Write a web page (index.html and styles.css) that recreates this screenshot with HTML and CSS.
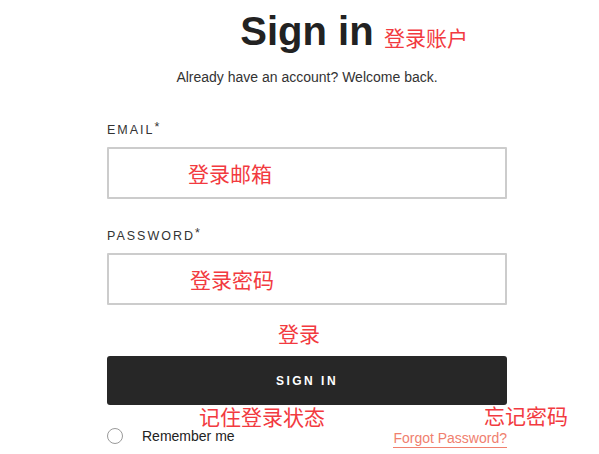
FILE: index.html
```html
<!DOCTYPE html>
<html lang="en">
<head>
<meta charset="utf-8">
<title>Sign in</title>
<link rel="stylesheet" href="styles.css">
</head>
<body>
<div class="page">
  <main class="form">
    <h1 class="title">Sign in</h1>
    <p class="subtitle">Already have an account? Welcome back.</p>
    <label class="label" for="email">EMAIL<span class="req">*</span></label>
    <input class="field" id="email" type="email">
    <label class="label label-pw" for="pw">PASSWORD<span class="req">*</span></label>
    <input class="field" id="pw" type="password">
    <button class="btn" type="button">SIGN IN</button>
    <div class="row">
      <label class="remember"><span class="radio"></span><span class="remember-text">Remember me</span></label>
      <a class="forgot" href="#">Forgot Password?</a>
    </div>
  </main>
  <span class="note note-title">登录账户</span>
  <span class="note note-email">登录邮箱</span>
  <span class="note note-pw">登录密码</span>
  <span class="note note-btn">登录</span>
  <span class="note note-remember">记住登录状态</span>
  <span class="note note-forgot">忘记密码</span>
</div>
</body>
</html>
```
FILE: styles.css
```css
* { box-sizing: border-box; }
html, body { margin: 0; padding: 0; background: #fff; }
body { font-family: "Liberation Sans", Arial, sans-serif; color: #333; }
.page { position: relative; width: 599px; height: 454px; overflow: hidden; }
.form {
  width: 400px;
  margin-left: 107px;
  display: flex;
  flex-direction: column;
}
.title {
  margin: 7px 0 0;
  font-size: 40px;
  line-height: 48px;
  font-weight: 700;
  color: #222;
  text-align: center;
}
.subtitle {
  margin: 12px 0 0;
  font-size: 14px;
  line-height: 20px;
  text-align: center;
  color: #333;
}
.label {
  display: block;
  height: 17px;
  margin-top: 35px;
  font-size: 12.5px;
  line-height: 17px;
  letter-spacing: 2px;
  color: #333;
}
.label-pw { margin-top: 29px; }
.req { position: relative; top: -3px; letter-spacing: 0; }
.field {
  display: block;
  margin: 8px 0 0;
  height: 52px;
  width: 100%;
  border: 2px solid #cccccc;
  border-radius: 1px;
  background: #fff;
  outline: none;
}
.btn {
  display: block;
  margin-top: 51px;
  height: 49px;
  width: 100%;
  border: 0;
  border-radius: 3px;
  background: #272727;
  color: #fff;
  font-family: "Liberation Sans", Arial, sans-serif;
  font-size: 12px;
  font-weight: 700;
  letter-spacing: 2.5px;
}
.row {
  margin-top: 21px;
  height: 20px;
  display: flex;
  align-items: center;
  justify-content: space-between;
}
.remember { display: flex; align-items: center; }
.radio {
  width: 16px;
  height: 16px;
  border: 1px solid #9a9a9a;
  border-radius: 50%;
  background: #fff;
}
.remember-text { margin-left: 19px; font-size: 14px; color: #222; }
.forgot {
  font-size: 14px;
  color: #f0806e;
  text-decoration: none;
  border-bottom: 1px solid #f0806e;
  line-height: 18px;
  position: relative;
  top: 2px;
}
.note {
  position: absolute;
  font-family: "Noto Sans CJK SC", sans-serif;
  font-size: 21px;
  line-height: 21px;
  color: #f23a40;
  white-space: nowrap;
}
.note-title { left: 384px; top: 27px; }
.note-email { left: 188px; top: 163px; }
.note-pw { left: 190px; top: 269px; }
.note-btn { left: 278px; top: 323px; }
.note-remember { left: 199px; top: 406px; }
.note-forgot { left: 484px; top: 405px; }
```
